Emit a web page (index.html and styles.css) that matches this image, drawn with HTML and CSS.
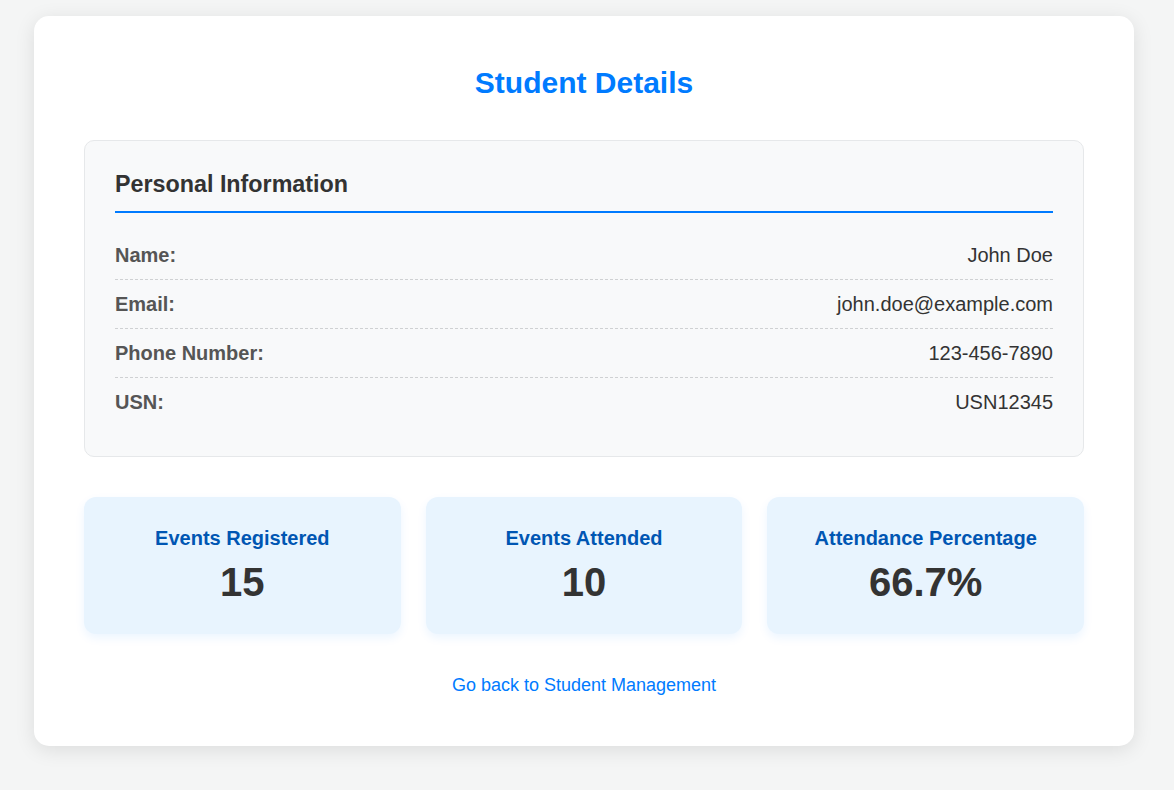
FILE: index.html
```html
<!DOCTYPE html>
<html lang="en">
<head>
<meta charset="utf-8">
<title>Student Details</title>
<link rel="stylesheet" href="styles.css">
</head>
<body>
<main class="container">
  <h1 class="title">Student Details</h1>
  <section class="info-box">
    <h2 class="info-heading">Personal Information</h2>
    <div class="info-row"><span class="label">Name:</span><span class="value">John Doe</span></div>
    <div class="info-row"><span class="label">Email:</span><span class="value">john.doe@example.com</span></div>
    <div class="info-row"><span class="label">Phone Number:</span><span class="value">123-456-7890</span></div>
    <div class="info-row"><span class="label">USN:</span><span class="value">USN12345</span></div>
  </section>
  <section class="stats">
    <div class="stat-card"><h3 class="stat-title">Events Registered</h3><div class="stat-value">15</div></div>
    <div class="stat-card"><h3 class="stat-title">Events Attended</h3><div class="stat-value">10</div></div>
    <div class="stat-card"><h3 class="stat-title">Attendance Percentage</h3><div class="stat-value">66.7%</div></div>
  </section>
  <div class="back"><a class="back-link" href="#">Go back to Student Management</a></div>
</main>
</body>
</html>
```
FILE: styles.css
```css
* { box-sizing: border-box; }
html, body { margin: 0; }
body {
  background: #f4f5f5;
  font-family: "Liberation Sans", Arial, sans-serif;
  color: #333;
  padding: 16px 40px 44px 34px;
}
.container {
  background: #fff;
  border-radius: 15px;
  box-shadow: 0 4px 20px rgba(0, 0, 0, 0.1);
  padding: 50px 50px 50px;
}
.title {
  margin: 0 0 40px;
  text-align: center;
  color: #007bff;
  font-size: 30px;
  line-height: 34px;
  font-weight: bold;
}
.info-box {
  background: #f8f9fa;
  border: 1px solid #e6e8ea;
  border-radius: 10px;
  padding: 30px 30px 30px;
}
.info-heading {
  margin: 0 0 18px;
  font-size: 23.3px;
  line-height: 26px;
  color: #333;
  padding-bottom: 14px;
  border-bottom: 2px solid #007bff;
}
.info-row {
  display: flex;
  justify-content: space-between;
  padding: 12px 0;
  font-size: 20px;
  line-height: 24px;
  border-bottom: 1px dashed #cfd1d3;
}
.info-row:last-child { border-bottom: none; }
.label { font-weight: bold; color: #555; }
.value { color: #333; }
.stats {
  display: flex;
  gap: 25px;
  margin-top: 40px;
}
.stat-card {
  flex: 1;
  background: #e8f4fe;
  border-radius: 12px;
  box-shadow: 0 4px 10px rgba(0, 123, 255, 0.08);
  padding: 30px 20px 29px;
  text-align: center;
}
.stat-title {
  margin: 0 0 9px;
  font-size: 20px;
  line-height: 23px;
  color: #0056b3;
}
.stat-value {
  font-size: 40px;
  line-height: 46px;
  font-weight: bold;
  color: #333;
}
.back {
  text-align: center;
  margin-top: 41px;
}
.back-link {
  color: #007bff;
  text-decoration: none;
  font-size: 18px;
  line-height: 21px;
}
```
